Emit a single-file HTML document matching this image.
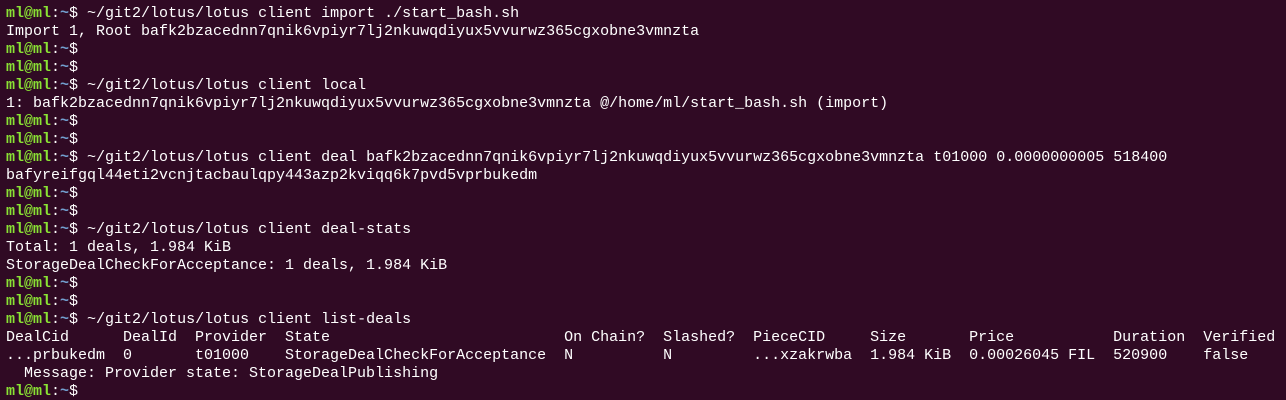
<!DOCTYPE html>
<html><head><meta charset="utf-8"><style>
html,body{margin:0;padding:0;background:#300a24;width:1286px;height:400px;overflow:hidden}
pre{margin:0;padding:5px 0 0 6px;font-family:"Liberation Mono","DejaVu Sans Mono",monospace;font-size:15px;line-height:18px;color:#ffffff;white-space:pre}
.g{color:#8ae234;font-weight:bold}.b{color:#729fcf;font-weight:bold}
</style></head><body><pre><span class="g">ml@ml</span>:<span class="b">~</span>$ ~/git2/lotus/lotus client import ./start_bash.sh
Import 1, Root bafk2bzacednn7qnik6vpiyr7lj2nkuwqdiyux5vvurwz365cgxobne3vmnzta
<span class="g">ml@ml</span>:<span class="b">~</span>$
<span class="g">ml@ml</span>:<span class="b">~</span>$
<span class="g">ml@ml</span>:<span class="b">~</span>$ ~/git2/lotus/lotus client local
1: bafk2bzacednn7qnik6vpiyr7lj2nkuwqdiyux5vvurwz365cgxobne3vmnzta @/home/ml/start_bash.sh (import)
<span class="g">ml@ml</span>:<span class="b">~</span>$
<span class="g">ml@ml</span>:<span class="b">~</span>$
<span class="g">ml@ml</span>:<span class="b">~</span>$ ~/git2/lotus/lotus client deal bafk2bzacednn7qnik6vpiyr7lj2nkuwqdiyux5vvurwz365cgxobne3vmnzta t01000 0.0000000005 518400
bafyreifgql44eti2vcnjtacbaulqpy443azp2kviqq6k7pvd5vprbukedm
<span class="g">ml@ml</span>:<span class="b">~</span>$
<span class="g">ml@ml</span>:<span class="b">~</span>$
<span class="g">ml@ml</span>:<span class="b">~</span>$ ~/git2/lotus/lotus client deal-stats
Total: 1 deals, 1.984 KiB
StorageDealCheckForAcceptance: 1 deals, 1.984 KiB
<span class="g">ml@ml</span>:<span class="b">~</span>$
<span class="g">ml@ml</span>:<span class="b">~</span>$
<span class="g">ml@ml</span>:<span class="b">~</span>$ ~/git2/lotus/lotus client list-deals
DealCid      DealId  Provider  State                          On Chain?  Slashed?  PieceCID     Size       Price           Duration  Verified
...prbukedm  0       t01000    StorageDealCheckForAcceptance  N          N         ...xzakrwba  1.984 KiB  0.00026045 FIL  520900    false
  Message: Provider state: StorageDealPublishing
<span class="g">ml@ml</span>:<span class="b">~</span>$
</pre></body></html>
